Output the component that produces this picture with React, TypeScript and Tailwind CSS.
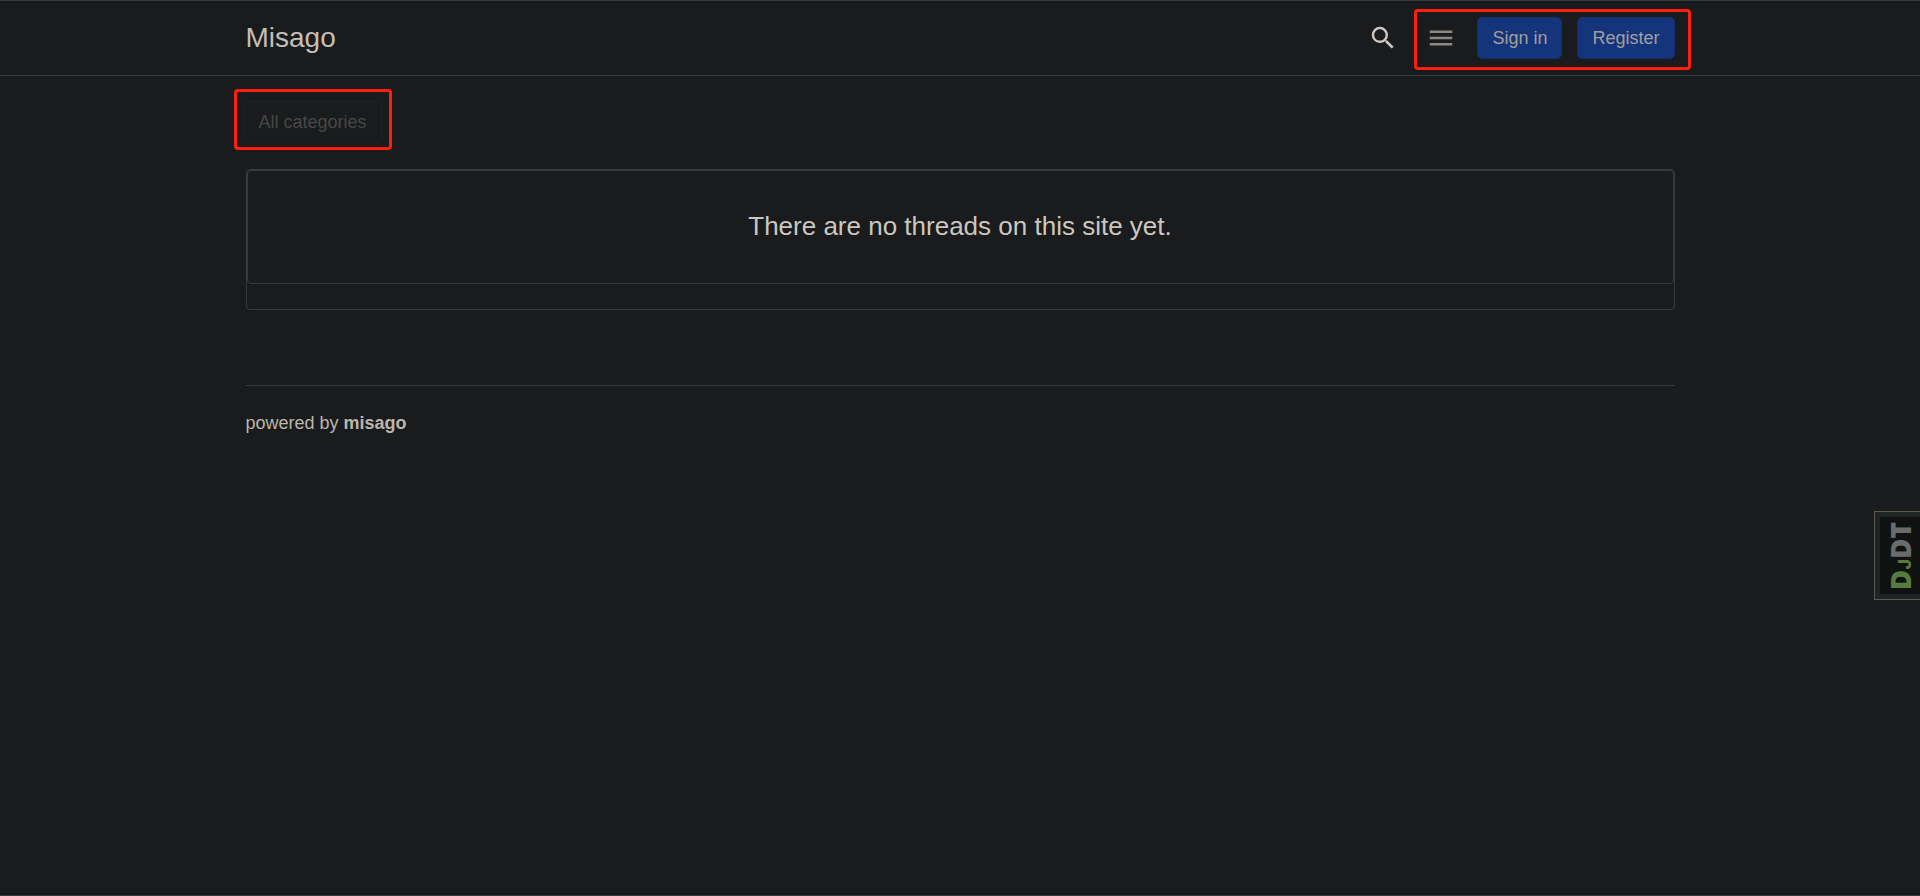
import { MdMenu, MdSearch } from "react-icons/md";

const Styles = {
  container: "mx-auto w-full max-w-[1429px]",
  navButton:
    "h-[42px] rounded-[5px] border border-[#132f70] bg-[#14347c] px-3.5 text-lg text-[#a19f9b]",
  highlight:
    "pointer-events-none absolute rounded-[4px] border-3 border-[#ff1e10]",
};

function Navbar() {
  return (
    <header className="border-y border-[#3a3d3f]">
      <div className={`${Styles.container} flex h-[74px] items-center`}>
        <a href="#" className="text-[28px] text-[#c3beb6]">
          Misago
        </a>
        <div className="ml-auto flex items-center gap-7 pb-px">
          <button type="button" aria-label="Search" className="text-[#cdc8c1]">
            <MdSearch className="size-[30px]" />
          </button>
          <div className="relative flex items-center gap-[15px]">
            <button
              type="button"
              aria-label="Menu"
              className="mr-1.5 text-[#8d8881]"
            >
              <MdMenu className="size-[30px]" />
            </button>
            <button type="button" className={Styles.navButton}>
              Sign in
            </button>
            <button type="button" className={Styles.navButton}>
              Register
            </button>
            <span
              className={`${Styles.highlight} -top-2 -right-4 -bottom-[11px] -left-3`}
            />
          </div>
        </div>
      </div>
    </header>
  );
}

function CategoryFilter() {
  return (
    <div className="-mx-0.5 flex">
      <div className="relative">
        <button
          type="button"
          disabled
          className="h-[42px] rounded-[5px] border border-[#1f2122] px-3.5 text-lg text-[#464746]"
        >
          All categories
        </button>
        <span
          className={`${Styles.highlight} -inset-x-2.5 -top-3 -bottom-[7px]`}
        />
      </div>
    </div>
  );
}

function ThreadsList() {
  return (
    <section className="mt-[26px] rounded-[4px] border border-[#37393b] pb-[25px]">
      <div className="flex h-[114px] items-center justify-center rounded-[4px] border border-[#37393b] pb-0.5">
        <p className="text-[26px] text-[#cbc7c0]">
          There are no threads on this site yet.
        </p>
      </div>
    </section>
  );
}

function DebugHandle() {
  return (
    <button
      type="button"
      aria-label="Show debug toolbar"
      className="fixed top-[511px] right-0 flex h-[89px] w-[46px] items-center justify-center border border-r-0 border-[#5c584d] bg-[#1f2425] py-[5px] pl-[5px]"
    >
      <span className="flex h-full w-full items-center justify-center bg-[#0f1211]">
        <span className="-rotate-90 font-['Open_Sans'] text-[28px] leading-none font-extrabold whitespace-nowrap text-[#6b6b6b]">
          <span className="text-[#577a3f]">
            D<span className="font-[Inter] text-lg leading-none">J</span>
          </span>
          DT
        </span>
      </span>
    </button>
  );
}

function App() {
  return (
    <div className="min-h-screen border-b border-[#3a3d3f] bg-[#191b1c] font-['Liberation_Sans',Arial,sans-serif]">
      <Navbar />
      <main className={`${Styles.container} pt-[25px]`}>
        <CategoryFilter />
        <ThreadsList />
      </main>
      <footer className={`${Styles.container} mt-[75px]`}>
        <div className="border-t border-[#37393b] pt-[23px] text-lg text-[#bbb6ad]">
          powered by{" "}
          <a href="#" className="font-bold">
            misago
          </a>
        </div>
      </footer>
      <DebugHandle />
    </div>
  );
}

export default App;
